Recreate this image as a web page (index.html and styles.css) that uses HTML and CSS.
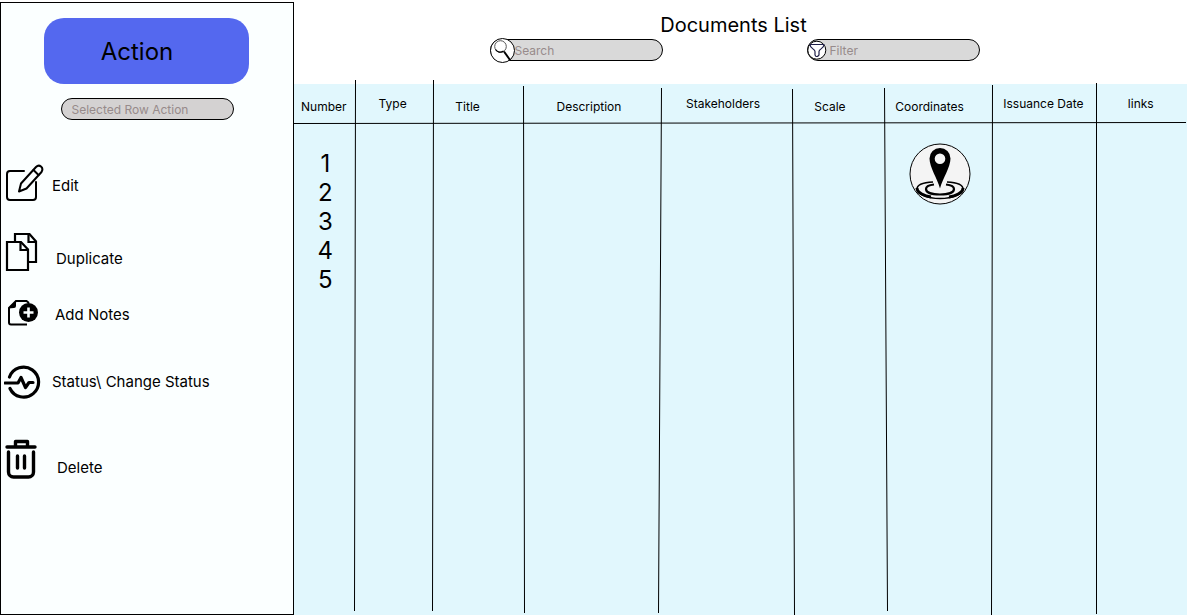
FILE: index.html
```html
<!DOCTYPE html>
<html lang="en">
<head>
<meta charset="utf-8">
<meta name="viewport" content="width=device-width, initial-scale=1">
<title>Documents List</title>
<link rel="stylesheet" href="styles.css">
</head>
<body>
<div class="app">
  <aside class="sidebar">
    <button class="action" type="button">Action</button>
    <input class="pill selected-row" type="text" placeholder="Selected Row Action" aria-label="Selected Row Action">
    <nav class="menu" aria-label="Row actions">
      <button class="item edit" type="button">
        <svg width="40" height="38" viewBox="0 0 40 38" fill="none" stroke="#000" stroke-width="2" stroke-linecap="round" stroke-linejoin="round" aria-hidden="true">
          <path d="M20 7H6a3 3 0 0 0-3 3v23a3 3 0 0 0 3 3h23a3 3 0 0 0 3-3V18"/>
          <path d="M15 27.500l2-8L32 3q2.500-2.500 5-.500t.500 5.500L22.500 24.500z"/>
          <path d="M29.500 6l5 5"/>
        </svg>
        <span>Edit</span>
      </button>
      <button class="item duplicate" type="button">
        <svg width="40" height="40" viewBox="0 0 40 40" fill="none" stroke="#000" stroke-width="2.200" aria-hidden="true">
          <path d="M3 10H17l7 7.500V38H3z"/>
          <path d="M16.500 10v8H24"/>
          <path d="M11 10V2h14.500L32 9.500V30h-8"/>
          <path d="M24.500 2v8H32"/>
        </svg>
        <span>Duplicate</span>
      </button>
      <button class="item notes" type="button">
        <svg width="40" height="28" viewBox="0 0 40 28" aria-hidden="true">
          <path d="M21 25.500H5a2 2 0 0 1-2-2V9l7-7h10.500l2.500 2" fill="none" stroke="#000" stroke-width="2"/>
          <path d="M2 9.500L10 1.500V7a2 2 0 0 1-2 2z"/>
          <circle cx="22.500" cy="13.500" r="9.500"/>
          <path d="M22.500 8.500v10M17.500 13.500h10" stroke="#fbffff" stroke-width="2.600"/>
        </svg>
        <span>Add Notes</span>
      </button>
      <button class="item status" type="button">
        <svg width="40" height="36" viewBox="0 0 40 36" fill="none" stroke="#000" stroke-width="3.200" stroke-linecap="round" stroke-linejoin="round" aria-hidden="true">
          <path d="M5.500 13A15 15 0 1 1 6 24.500"/>
          <path d="M1 19H14l3-5.500 4.500 10 3.500-5h4"/>
        </svg>
        <span>Status\ Change Status</span>
      </button>
      <button class="item delete" type="button">
        <svg width="40" height="40" viewBox="0 0 40 40" fill="none" stroke="#000" stroke-width="3.400" stroke-linecap="round" stroke-linejoin="round" aria-hidden="true">
          <path d="M3 8h28M11.500 7V2.500h12V7"/>
          <path d="M4.500 13v20a5 5 0 0 0 5 5h15a5 5 0 0 0 5-5V13"/>
          <path d="M13.500 17v12M20.500 17v12"/>
        </svg>
        <span>Delete</span>
      </button>
    </nav>
  </aside>

  <main class="content">
    <header class="header">
      <h1>Documents List</h1>
      <div class="tools">
        <label class="field search">
          <input class="pill" type="text" placeholder="Search" aria-label="Search">
          <svg class="badge" width="26" height="26" viewBox="0 0 26 26" aria-hidden="true">
            <circle cx="12.500" cy="13.500" r="12" fill="#fff" stroke="#000"/>
            <circle cx="10.500" cy="9.500" r="5.800" fill="#fff" stroke="#555" stroke-width="1"/>
            <path d="M5.500 12.500a5.500 5.500 0 0 0 8 1.500" fill="none" stroke="#000" stroke-width="1.300"/>
            <path d="M14 14.500l6 8.500" stroke="#000" stroke-width="2"/>
          </svg>
        </label>
        <label class="field filter">
          <input class="pill" type="text" placeholder="Filter" aria-label="Filter">
          <svg class="badge" width="20" height="22" viewBox="0 0 20 22" aria-hidden="true">
            <circle cx="9.800" cy="11.200" r="9" fill="#fff" stroke="#000"/>
            <path d="M3 5.500h14c0 4-5 4.500-5 7V16l-1.500 1.500H9L8 16v-3.500C8 10 3 9.500 3 5.500z" fill="#fff" stroke="#20204a" stroke-width="1.200" stroke-linejoin="round"/>
          </svg>
        </label>
      </div>
    </header>

    <section class="sheet">
      <table class="documents">
        <colgroup>
          <col class="w-number"><col class="w-type"><col class="w-title"><col class="w-description"><col class="w-stakeholders"><col class="w-scale"><col class="w-coordinates"><col class="w-date"><col class="w-links">
        </colgroup>
        <thead>
          <tr>
            <th class="number low" scope="col">Number</th>
            <th class="type" scope="col">Type</th>
            <th class="title low" scope="col">Title</th>
            <th class="description low" scope="col">Description</th>
            <th class="stakeholders" scope="col">Stakeholders</th>
            <th class="scale low" scope="col">Scale</th>
            <th class="coordinates low" scope="col">Coordinates</th>
            <th class="date" scope="col">Issuance Date</th>
            <th class="links" scope="col">links</th>
          </tr>
        </thead>
        <tbody>
          <tr>
            <td class="index">1</td><td></td><td></td><td></td><td></td><td></td>
            <td class="place" rowspan="5">
              <button class="pin" type="button" aria-label="Show coordinates">
                <svg width="62" height="62" viewBox="0 0 62 62" aria-hidden="true">
                  <circle cx="31" cy="31" r="30" fill="#f4f4f4" stroke="#000"/>
                  <g fill="none" stroke="#000">
                    <path d="M24 39C14 39.500 8 42 8 46c0 5 10 9.500 23 9.500S54 51 54 46c0-4-6-6.500-16-7" stroke-width="1.600"/>
                    <path d="M8 45c0 5 8 8 14 9M54 45c0 5-8 8-14 9" stroke-width="3"/>
                    <path d="M25 41.500c-5 .500-8 2-8 4.500 0 3.500 6 5.500 14 5.500s14-2 14-5.500c0-2.500-3-4-8-4.500" stroke-width="2.200"/>
                  </g>
                  <path fill-rule="evenodd" d="M31 45.500C28.500 36 20.500 24 20.500 15.500a10.500 10.500 0 0 1 21 0C41.500 24 33.500 36 31 45.500zM31 10.500a5.300 5.300 0 1 0 0 10.600 5.300 5.300 0 0 0 0-10.600z"/>
                </svg>
              </button>
            </td>
            <td></td><td></td>
          </tr>
          <tr><td class="index">2</td><td></td><td></td><td></td><td></td><td></td><td></td><td></td></tr>
          <tr><td class="index">3</td><td></td><td></td><td></td><td></td><td></td><td></td><td></td></tr>
          <tr><td class="index">4</td><td></td><td></td><td></td><td></td><td></td><td></td><td></td></tr>
          <tr><td class="index">5</td><td></td><td></td><td></td><td></td><td></td><td></td><td></td></tr>
        </tbody>
      </table>
      <svg class="rules" viewBox="0 0 893 531" preserveAspectRatio="none" aria-hidden="true">
        <path d="M61.500-4L60.500 527M139.500-4L138.500 527M229.500 2L230.500 529M367.500 4L364.500 529M498.500 5L500.500 531M590.500 4L593.500 527M698.500 1L697.500 531M802.500-1V530M0 39.500L892 38.500"/>
      </svg>
    </section>
  </main>
</div>
</body>
</html>
```
FILE: styles.css
```css
* {
  box-sizing: border-box;
}

body {
  margin: 0;
  background: #fff;
  color: #000;
  font-family: Inter, "Liberation Sans", sans-serif;
}

button {
  padding: 0;
  border: 0;
  background: none;
  color: inherit;
  font: inherit;
  cursor: pointer;
}

svg {
  display: block;
  flex: none;
}

.app {
  display: flex;
  min-height: 100vh;
}

.sidebar {
  flex: 0 0 294px;
  display: flex;
  flex-direction: column;
  align-items: center;
  margin-top: 2px;
  padding: 15px 2px 0 0;
  border: 1px solid #000;
  background: #fbffff;
}

.action {
  width: 205px;
  height: 66px;
  padding-right: 18px;
  border-radius: 20px;
  background: #5468ef;
  font-size: 24px;
}

.pill {
  display: block;
  width: 173px;
  height: 22px;
  padding: 0 10px;
  border: 1px solid #000;
  border-radius: 11px;
  background: #d9d9d9;
  color: #000;
  font: 12px Inter, "Liberation Sans", sans-serif;
}

.pill::placeholder {
  color: #978b8b;
  opacity: 1;
}

.selected-row {
  margin: 14px 0 0 2px;
  background: #d4d2d2;
}

.menu {
  align-self: stretch;
  display: flex;
  flex-direction: column;
  margin-top: 44px;
  padding-left: 3px;
}

.item {
  display: flex;
  align-items: center;
  text-align: left;
  font-size: 15px;
  line-height: 20px;
}

.edit {
  gap: 8px;
}

.edit span {
  padding-top: 6px;
}

.duplicate {
  gap: 12px;
  margin-top: 30px;
}

.duplicate span {
  padding-top: 14px;
}

.notes {
  gap: 9px;
  margin-top: 27px;
}

.notes span {
  padding-top: 4px;
}

.notes svg {
  margin-left: 2px;
}

.status {
  gap: 8px;
  margin-top: 37px;
}

.delete {
  gap: 13px;
  margin-top: 39px;
}

.delete span {
  padding-top: 18px;
}

.content {
  flex: 1;
  min-width: 0;
  display: flex;
  flex-direction: column;
}

.header {
  height: 84px;
  padding: 13px 12px 0 0;
}

h1 {
  margin: 0;
  padding-right: 2px;
  font-size: 20px;
  font-weight: 400;
  line-height: 24px;
  text-align: center;
}

.tools {
  display: flex;
  justify-content: center;
  gap: 144px;
  margin-top: 2px;
}

.field {
  position: relative;
}

.badge {
  position: absolute;
  top: 0;
  left: 0;
}

.search .badge {
  top: -2px;
}

.search .pill {
  padding-left: 24px;
}

.filter .pill {
  padding-left: 22px;
}

.sheet {
  position: relative;
  flex: 1;
  background: #e1f7fd;
}

.documents {
  width: 100%;
  table-layout: fixed;
  border-collapse: collapse;
}

.w-number { width: 6.9%; }
.w-type { width: 8.7%; }
.w-title { width: 10.1%; }
.w-description { width: 15.4%; }
.w-stakeholders { width: 14.7%; }
.w-scale { width: 10.3%; }
.w-coordinates { width: 12.1%; }
.w-date { width: 11.6%; }
.w-links { width: 10.2%; }

th {
  height: 39px;
  padding: 12px 0 0;
  font-size: 12px;
  font-weight: 400;
  line-height: 16px;
  text-align: left;
  vertical-align: top;
  white-space: nowrap;
}

.low {
  padding-top: 15px;
}

.number { padding-left: 7px; }
.type { padding-left: 23px; }
.title { padding-left: 22px; }
.description { padding-left: 33px; }
.stakeholders { padding-left: 25px; }
.scale { padding-left: 22px; }
.coordinates { padding-left: 11px; }
.date { padding-left: 11px; }
.links { padding-left: 32px; }

td {
  padding: 0;
}

.index {
  padding-left: 1px;
  font-size: 24px;
  line-height: 29px;
  text-align: center;
}

tbody tr:first-child .index {
  padding-top: 26px;
}

.place {
  padding: 20px 0 0 25px;
  vertical-align: top;
}

.pin {
  display: block;
}

.rules {
  position: absolute;
  inset: 0;
  width: 100%;
  height: 100%;
  overflow: visible;
  fill: none;
  stroke: #000;
  pointer-events: none;
}

.rules path {
  vector-effect: non-scaling-stroke;
}
```
